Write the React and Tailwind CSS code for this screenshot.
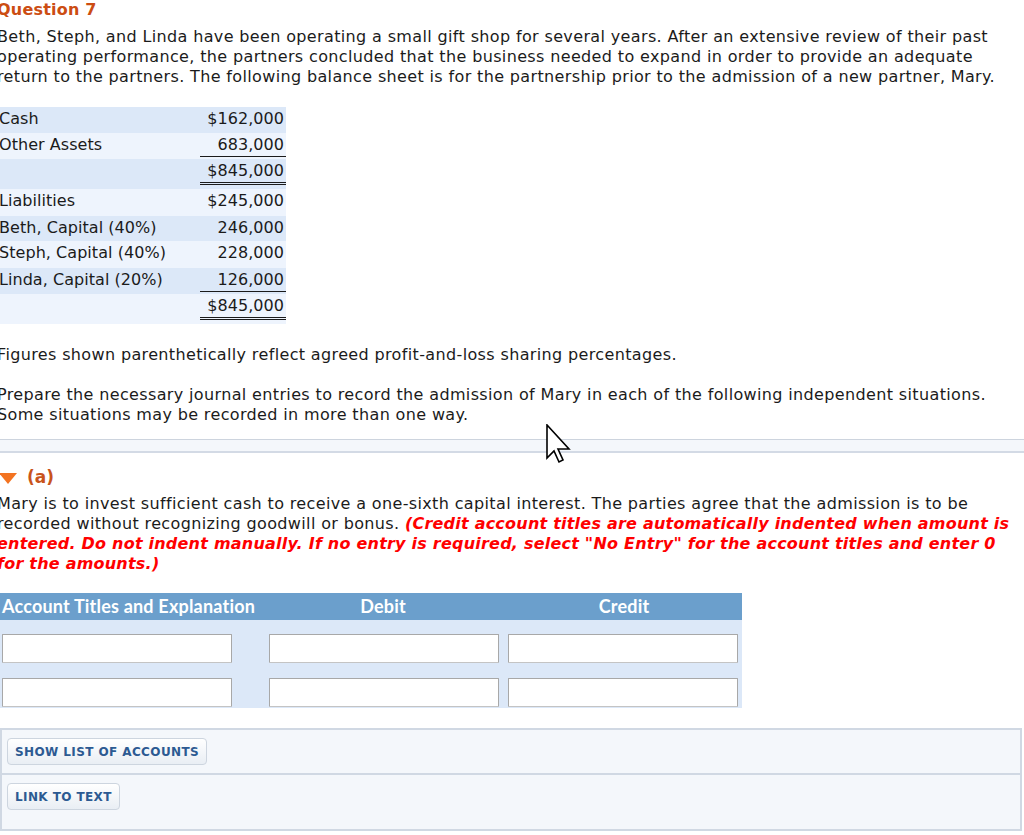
import React from "react";

const rows = [
  { label: "Cash", amt: "$162,000", bg: "bg-[#dce8f8]", h: "h-[26px]" },
  { label: "Other Assets", amt: "683,000", bg: "bg-[#eef4fd]", h: "h-[26px]", line: "single" },
  { label: "", amt: "$845,000", bg: "bg-[#dce8f8]", h: "h-[30px]", line: "double" },
  { label: "Liabilities", amt: "$245,000", bg: "bg-[#eef4fd]", h: "h-[27px]" },
  { label: "Beth, Capital (40%)", amt: "246,000", bg: "bg-[#dce8f8]", h: "h-[25px]" },
  { label: "Steph, Capital (40%)", amt: "228,000", bg: "bg-[#eef4fd]", h: "h-[27px]" },
  { label: "Linda, Capital (20%)", amt: "126,000", bg: "bg-[#dce8f8]", h: "h-[26px]", line: "single" },
  { label: "", amt: "$845,000", bg: "bg-[#eef4fd]", h: "h-[30px]", line: "double" },
];

function Input({ w }) {
  return (
    <div className={`${w} h-[29px] bg-white border border-[#a8a8a8] border-b-[#c4c4c4] rounded-[1px]`} />
  );
}

function Btn({ children }) {
  return (
    <button className="h-[27px] px-[7px] rounded-[4px] border border-[#cdd5df] bg-gradient-to-b from-white to-[#e9eef4] text-[#2c5a92] font-bold text-[12px] tracking-[0.4px]">
      {children}
    </button>
  );
}

export default function App() {
  return (
    <div
      className="relative w-[1024px] min-h-[835px] bg-white text-[#1b1b1b] overflow-hidden"
      style={{ fontFamily: '"DejaVu Sans", Verdana, sans-serif' }}
    >
      <div className="-ml-[3px] text-[16px] leading-[20px] tracking-[0.36px]">
        <div className="text-[#cc4d12] font-bold text-[16px] leading-[20px] tracking-[0.2px]">Question 7</div>
        <p className="mt-[7px] whitespace-nowrap">
          Beth, Steph, and Linda have been operating a small gift shop for several years. After an extensive review of their past
          <br />
          operating performance, the partners concluded that the business needed to expand in order to provide an adequate
          <br />
          return to the partners. The following balance sheet is for the partnership prior to the admission of a new partner, Mary.
        </p>
      </div>

      <div className="mt-[20px] w-[286px] text-[16px] tracking-[0.05px]">
        {rows.map((r, i) => (
          <div key={i} className={`flex ${r.bg} ${r.h}`}>
            <div className="flex-1 -ml-[1px] pt-[2px] leading-[20px]">{r.label}</div>
            <div className="w-[86px] flex flex-col items-end">
              <div
                className={`w-full text-right pr-[2px] pt-[2px] pb-[1px] leading-[20px] ${
                  r.line === "single"
                    ? "border-b border-[#1b1b1b]"
                    : r.line === "double"
                    ? "border-b-[3px] border-double border-[#1b1b1b]"
                    : ""
                }`}
              >
                {r.amt}
              </div>
            </div>
          </div>
        ))}
      </div>

      <div className="-ml-[3px] text-[16px] leading-[20px] tracking-[0.36px]">
        <p className="mt-[21px] whitespace-nowrap">Figures shown parenthetically reflect agreed profit-and-loss sharing percentages.</p>
        <p className="mt-[20px] whitespace-nowrap">
          Prepare the necessary journal entries to record the admission of Mary in each of the following independent situations.
          <br />
          Some situations may be recorded in more than one way.
        </p>
      </div>

      <div className="mt-[14px] h-[14px] border-t border-b-2 border-[#cdd4de] border-b-[#d3dae5] bg-[#f4f7fb]" />

      <div className="mt-[15px] flex items-center gap-[10px] h-[20px]">
        <svg width="18" height="11" viewBox="0 0 18 11" className="-ml-[1px]">
          <polygon points="0,0 18,0 9,11" fill="#f37321" />
        </svg>
        <span className="text-[#c9541b] font-bold text-[17px]">(a)</span>
      </div>

      <div className="-ml-[3px] text-[16px] leading-[20px] mt-[6px] whitespace-nowrap tracking-[0.36px]">
        Mary is to invest sufficient cash to receive a one-sixth capital interest. The parties agree that the admission is to be
        <br />
        recorded without recognizing goodwill or bonus.{" "}
        <span className="text-[#ff0000] font-bold italic tracking-[0.22px]">
          (Credit account titles are automatically indented when amount is
          <br />
          entered. Do not indent manually. If no entry is required, select "No Entry" for the account titles and enter 0
          <br />
          for the amounts.)
        </span>
      </div>

      <div className="mt-[19px] w-[742px]">
        <div
          className="flex h-[27px] items-center bg-[#6b9fcc] text-white font-bold text-[18px] tracking-[0.2px]"
          style={{ fontFamily: 'Lato, "Open Sans", sans-serif' }}
        >
          <div className="w-[260px] pl-[2px] whitespace-nowrap">Account Titles and Explanation</div>
          <div className="w-[246px] text-center">Debit</div>
          <div className="flex-1 text-center">Credit</div>
        </div>
        <div className="bg-[#dce8f8] pt-[14px] pb-[1px]">
          {[0, 1].map((k) => (
            <div key={k} className={`flex h-[29px] ${k === 1 ? "mt-[15px]" : ""}`}>
              <div className="w-[269px] pl-[2px]">
                <Input w="w-[230px]" />
              </div>
              <div className="w-[239px]">
                <Input w="w-[230px]" />
              </div>
              <div>
                <Input w="w-[230px]" />
              </div>
            </div>
          ))}
        </div>
      </div>

      <div className="mt-[20px] w-[1022px] border-2 border-[#d0d8e3] bg-[#f4f7fb]">
        <div className="h-[45px] flex items-center pl-[5px] border-b-2 border-[#d0d8e3]">
          <Btn>SHOW LIST OF ACCOUNTS</Btn>
        </div>
        <div className="h-[54px] pt-[8px] pl-[5px]">
          <Btn>LINK TO TEXT</Btn>
        </div>
      </div>

      <svg
        className="absolute left-[546px] top-[424px]"
        width="26"
        height="40"
        viewBox="0 0 26 40"
      >
        <polygon
          points="1,1 1,34 8,27 13,38 17,36 12,25 23,25"
          fill="white"
          stroke="black"
          strokeWidth="1.6"
          strokeLinejoin="miter"
        />
      </svg>
    </div>
  );
}
